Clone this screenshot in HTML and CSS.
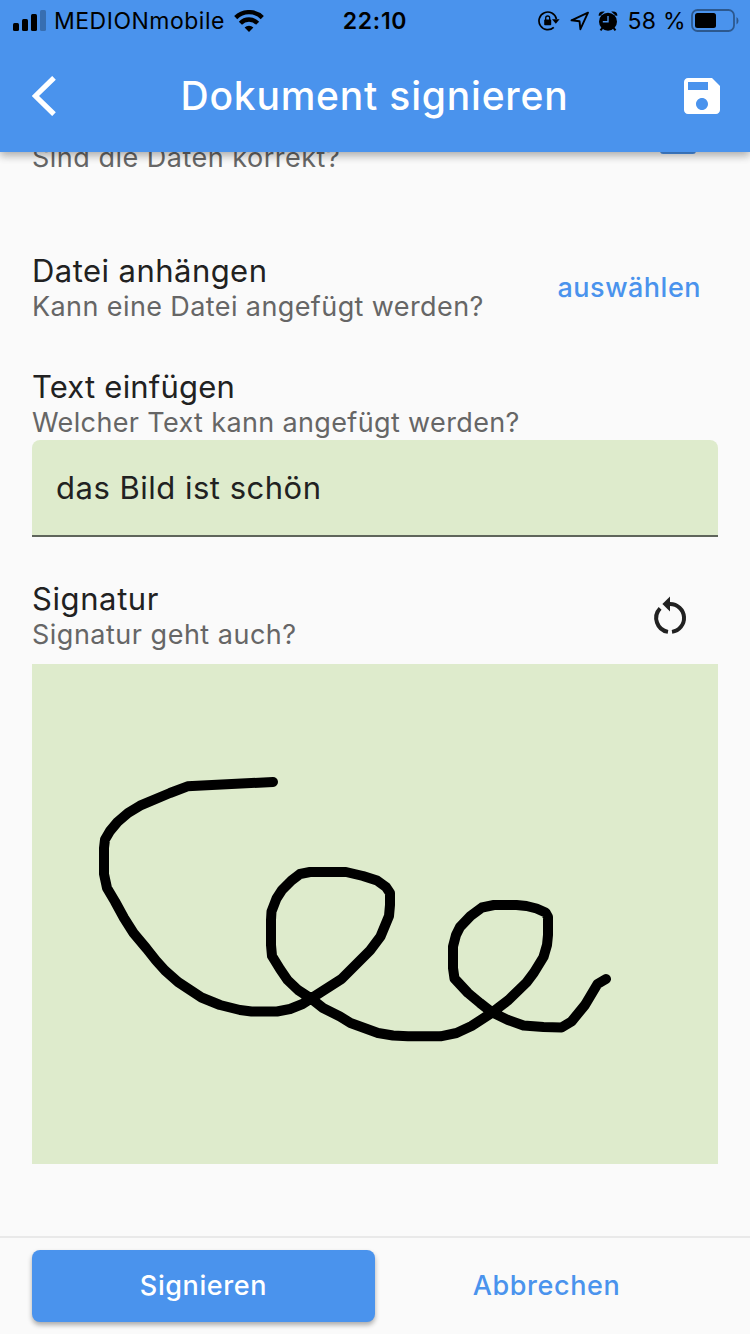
FILE: index.html
```html
<!DOCTYPE html>
<html lang="de">
<head>
<meta charset="utf-8">
<title>Dokument signieren</title>
<link rel="stylesheet" href="styles.css">
</head>
<body>
<div class="app">
  <header class="header">
    <div class="status">
      <div class="status-left">
        <svg class="signal" width="34" height="22" viewBox="0 0 34 22"><rect x="0" y="13" width="6" height="8" rx="1.5"/><rect x="9" y="9" width="6" height="12" rx="1.5"/><rect x="18" y="4" width="6" height="17" rx="1.5"/><rect x="27" y="0" width="6" height="21" rx="1.5" opacity=".25"/></svg>
        <span class="carrier">MEDIONmobile</span>
        <svg class="wifi" width="30" height="22" viewBox="0 0 30 22"><g fill="none" stroke="#000" stroke-width="4.4"><path d="M1.7 7.6a19 19 0 0 1 26.6 0"/><path d="M6.4 13.2a12 12 0 0 1 17.2 0"/></g><path d="M15 22l-4.4-4.4a6.2 6.2 0 0 1 8.8 0z"/></svg>
      </div>
      <span class="clock">22:10</span>
      <div class="status-right">
        <svg class="rotation" width="22" height="20" viewBox="0 0 22 20"><path d="M15.8 16.3A8.8 8.8 0 1 1 18.4 8" fill="none" stroke="#000" stroke-width="1.7"/><path d="M14 8.2h7.6l-3.8 4.6z"/><rect x="6.2" y="8.6" width="7" height="5.6" rx=".8"/><path d="M7.7 9V7a2 2 0 0 1 4 0v2" fill="none" stroke="#000" stroke-width="1.3"/></svg>
        <svg class="location" width="20" height="20" viewBox="0 0 20 20"><path d="M18 1.7L1.5 9.3l8 .9.9 8z" fill="none" stroke="#000" stroke-width="1.9" stroke-linejoin="round"/></svg>
        <svg class="alarm" width="20" height="20" viewBox="0 0 20 20"><circle cx="10" cy="10.7" r="9"/><path d="M.6 4.8Q.6.4 5 .4h1.8L2.2 4.8zM19.4 4.8Q19.4.4 15 .4h-1.8l4.6 4.4z"/><path d="M4.5 16.8l-2 2.6M15.5 16.8l2 2.6" stroke="#000" stroke-width="2"/><path d="M10 5v5.7H4.8" fill="none" stroke="#4a93ed" stroke-width="1.4"/></svg>
        <span class="percent">58 %</span>
        <svg class="battery" width="48" height="24" viewBox="0 0 48 24"><rect x="1" y="1" width="42" height="21" rx="5.5" fill="none" stroke="#000" stroke-opacity=".4" stroke-width="1.8"/><rect x="4" y="4" width="21" height="15" rx="2.5"/><path d="M45.5 8v7.5q2-1 2-3.75T45.5 8z" opacity=".4"/></svg>
      </div>
    </div>
    <div class="toolbar">
      <svg class="back" width="24" height="40" viewBox="0 0 24 40"><path d="M22 1.8L3.4 20 22 38.2" fill="none" stroke="#fff" stroke-width="5.2"/></svg>
      <h1 class="title">Dokument signieren</h1>
      <svg class="save" width="36" height="36" viewBox="3 3 18 18"><path fill="#fff" d="M17 3H5c-1.11 0-2 .9-2 2v14c0 1.1.89 2 2 2h14c1.1 0 2-.9 2-2V7l-4-4zm-5 16c-1.66 0-3-1.34-3-3s1.34-3 3-3 3 1.34 3 3-1.34 3-3 3zm3-10H5V5h10v4z"/></svg>
    </div>
  </header>
  <main class="content">
    <section class="row row-check">
      <div class="texts"><p class="hint hint-korrekt">Sind die Daten korrekt?</p></div>
      <span class="checkbox"></span>
    </section>
    <section class="row row-file">
      <div class="texts"><h2 class="label label-datei">Datei anhängen</h2><p class="hint">Kann eine Datei angefügt werden?</p></div>
      <span class="choose">auswählen</span>
    </section>
    <section class="row row-text">
      <div class="texts"><h2 class="label label-text">Text einfügen</h2><p class="hint hint-text">Welcher Text kann angefügt werden?</p></div>
    </section>
    <div class="field">das Bild ist schön</div>
    <section class="row row-signature">
      <div class="texts"><h2 class="label label-sign">Signatur</h2><p class="hint hint-sign">Signatur geht auch?</p></div>
      <svg class="reset" width="48" height="48" viewBox="0 0 24 24"><g fill="none" stroke="#212121" stroke-width="2"><path d="M7.05 7.2A7 7 0 0 0 11 18.93M13 18.93A7 7 0 0 0 12 5"/></g><path d="M12 1.3v7.5L8.2 5.05z" fill="#212121"/></svg>
    </section>
    <svg class="pad" viewBox="32 664 686 500"><polyline fill="none" stroke="#000" stroke-width="10" stroke-linecap="round" stroke-linejoin="round" points="273,782 187.5,786.3 170,793 140,805.7 128,813 117.5,822 110,831 105,839.5 104,848 104,874 107,888 115,901.5 124,918 133.5,933 146.5,948.5 156,960.5 165,970.5 178,982 201.5,997.5 220,1005 240,1010 251.5,1011.5 277,1011.5 290,1009 302.5,1004 311,998.5 341.5,979 370,950.5 380.5,936.5 389,916 390,905 390,893 386,887 377,880.5 363,876 346,872 310,872 300,874 291.5,880.5 282,890 276.5,898.5 271.5,911.5 271,920 271,945 272,956 280,969 287.5,980 298,990 311,998.5 323,1008 340,1016.5 350.5,1023 378,1033 393,1035.5 408,1036.3 440.5,1036.3 456.5,1033 471.5,1026 491.5,1013 508.5,1000 526.5,982.5 534,972.5 543.5,957 547,945 548,935 548,917 545.5,912.5 536.5,908.5 526.5,906 516.5,905 494,905 482,907.5 470.5,916 460,927 456,935 453,946.5 453,968 454.5,978.5 468,993 480,1003 491.5,1012 508,1020 523.5,1025.5 543.5,1027 561.5,1027.5 571.5,1021.5 585,1005 597.5,984 606,979"/></svg>
  </main>
  <footer class="footer">
    <div class="button primary"><span>Signieren</span></div>
    <div class="button flat"><span>Abbrechen</span></div>
  </footer>
</div>
</body>
</html>
```
FILE: styles.css
```css
* { box-sizing: border-box; }
body { margin: 0; background: #fafafa; font-family: Inter, "Liberation Sans", sans-serif; color: #212121; }
h1, h2, p { margin: 0; font-weight: 400; white-space: nowrap; }
svg { display: block; flex: none; }
.app { width: 750px; height: 1334px; display: flex; flex-direction: column; overflow: hidden; }
.header { position: relative; z-index: 1; height: 152px; flex: none; background: #4a93ed; box-shadow: 0 4px 8px rgba(0,0,0,.2), 0 2px 10px rgba(0,0,0,.16); }
.status { height: 40px; display: grid; grid-template-columns: 1fr auto 1fr; align-items: center; color: #000; font-size: 23px; line-height: 40px; white-space: nowrap; }
.status-left, .status-right { display: flex; align-items: center; }
.status-left { padding-left: 13px; }
.status-right { justify-content: flex-end; padding-right: 11px; }
.carrier, .percent, .clock { padding-top: 1px; }
.carrier { margin-left: 7px; width: 170px; letter-spacing: .5px; }
.wifi { margin-left: 10px; }
.clock { font-weight: 600; letter-spacing: .7px; }
.location { margin-left: 10px; }
.alarm { margin-left: 8px; }
.percent { margin: 0 5px 0 10px; letter-spacing: .3px; }
.toolbar { height: 112px; display: flex; align-items: center; justify-content: space-between; padding: 0 30px 0 32px; }
.title { margin-left: 9px; color: #fff; font-size: 39px; font-weight: 500; line-height: 48px; letter-spacing: .8px; }
.content { height: 1084px; flex: none; overflow: hidden; padding: 0 32px; }
.row { display: flex; justify-content: space-between; align-items: center; height: 72px; }
.texts { margin-top: 2px; }
.row-check { margin-top: -49px; }
.row-check .texts { margin-top: 38px; }
.row-file { margin-top: 77px; padding-right: 17px; }
.row-text { margin-top: 44px; }
.row-signature { margin-top: 43px; padding-right: 24px; }
.label { font-size: 31px; line-height: 36px; letter-spacing: .45px; }
.label-text { letter-spacing: .2px; }
.label-sign { letter-spacing: .6px; }
.hint { font-size: 27px; line-height: 36px; color: #666; letter-spacing: .4px; }
.hint-text { letter-spacing: .36px; }
.hint-korrekt, .hint-sign { letter-spacing: .5px; }
.checkbox { width: 36px; height: 36px; margin: 0 22px 6px 0; border-radius: 3px; background: #4a93ed; }
.choose { margin-bottom: 2px; color: #4a93ed; font-size: 27px; font-weight: 500; letter-spacing: .5px; }
.reset { margin-top: 4px; }
.field { height: 97px; padding: 0 24px; background: #deebcc; border-bottom: 2px solid #5f655b; border-radius: 8px 8px 0 0; font-size: 31px; line-height: 96px; letter-spacing: .5px; }
.pad { width: 686px; height: 500px; margin-top: 12px; background: #deebcc; }
.footer { height: 98px; flex: none; border-top: 2px solid #e9e9e9; padding: 12px 32px 0; display: flex; }
.button { width: 343px; height: 72px; padding-bottom: 2px; border-radius: 8px; display: flex; align-items: center; justify-content: center; font-size: 27px; font-weight: 500; letter-spacing: .6px; }
.primary { background: #4a93ed; color: #fff; box-shadow: 0 3px 5px rgba(0,0,0,.32); }
.flat { color: #4a93ed; }
```
